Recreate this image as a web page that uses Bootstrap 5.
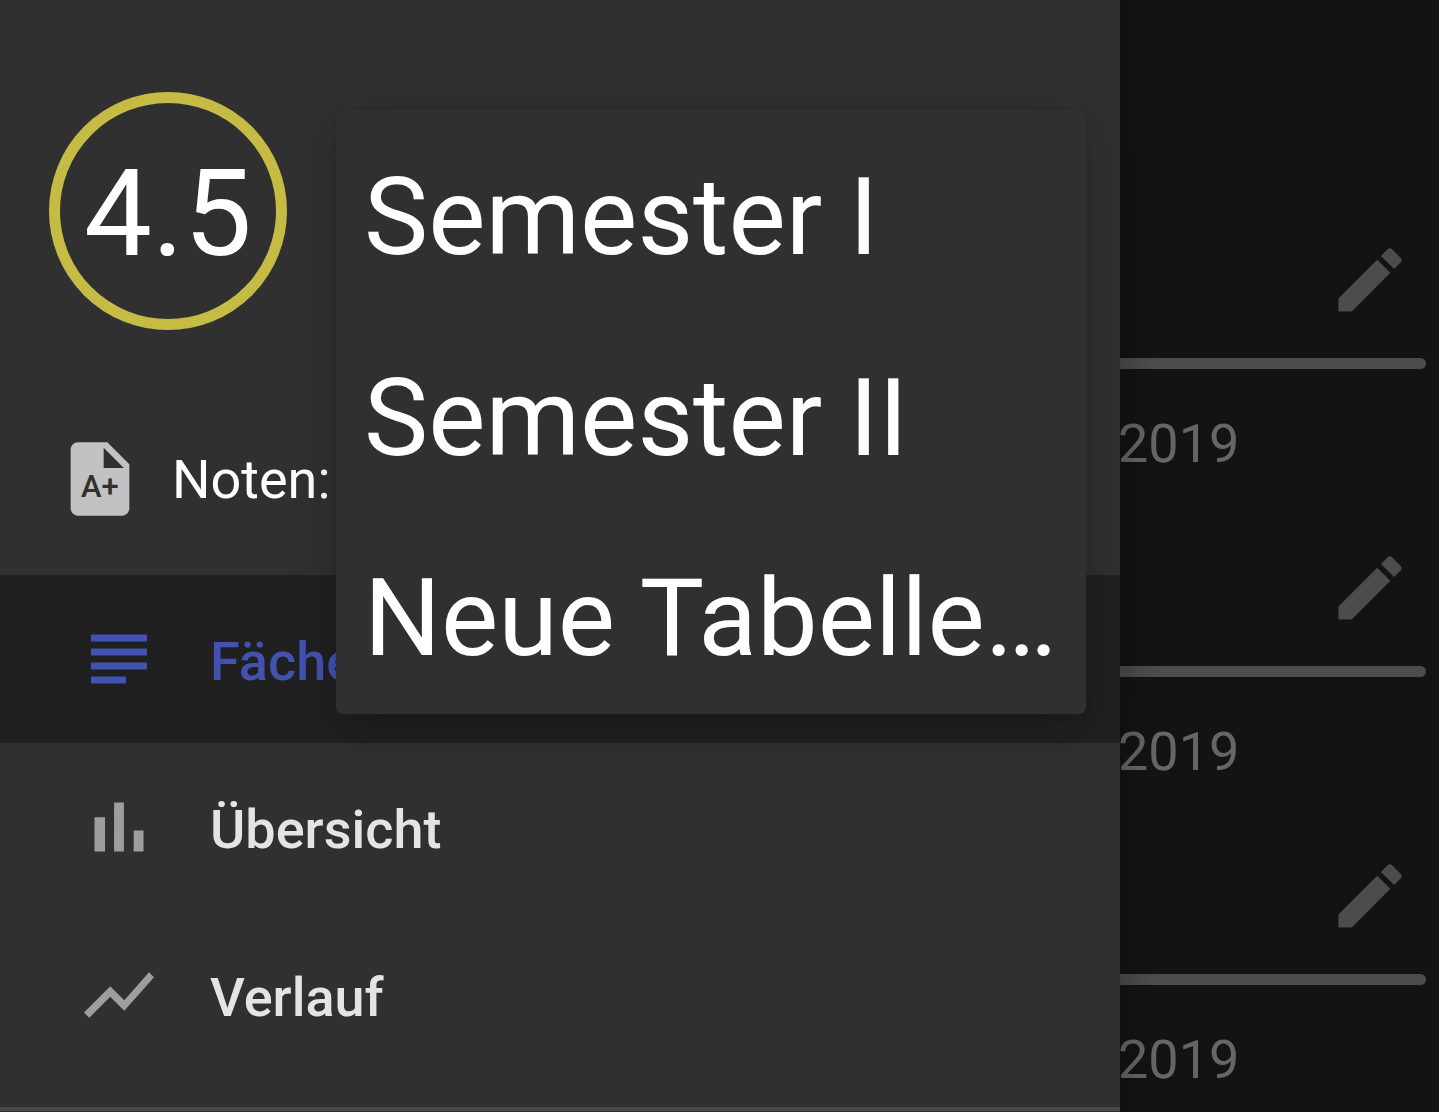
<!DOCTYPE html>
<html lang="de">
<head>
<meta charset="utf-8">
<meta name="viewport" content="width=device-width, initial-scale=1">
<title>Noten</title>
<link href="https://cdn.jsdelivr.net/npm/bootstrap@5.3.0/dist/css/bootstrap.min.css" rel="stylesheet">
<style>
  body { background: #131313; color: #fff; font-family: Roboto, "Noto Sans", sans-serif; font-size: 54px; line-height: 64px; }
  svg { display: block; fill: currentColor; }

  /* Drawer */
  .drawer { background: #303030; min-width: 0; }
  .drawer-head { padding: 92px 49px 52px; }
  .average { width: 238px; height: 238px; padding-top: 6px; border: 11px solid #c6bb45; font-size: 121px; line-height: 1; }
  .table-label { margin-top: 105px; padding-left: 7px; gap: 28px; }
  .table-label span { padding-top: 2px; }
  .table-label svg { width: 88px; height: 88px; color: #c2c2c2; }
  .table-label .grade-mark { font-size: 31px; font-weight: 500; fill: #303030; }
  .drawer-link { height: 168px; padding-left: 77px; gap: 49px; font-weight: 500; color: #e4e4e4; }
  .drawer-link:hover { color: #fff; }
  .drawer-link span { padding-top: 6px; }
  .drawer-link svg { width: 84px; height: 84px; color: #9e9e9e; }
  .drawer-link.active, .drawer-link.active svg { color: #4352b1; }
  .drawer-link.active { background: #202020; }
  .drawer-rule { margin: 28px 0 0; border-top: 4px solid #494949; opacity: 1; }

  /* Table picker */
  .picker { top: 110px; left: 336px; width: 750px; padding: 6px 0 0; border: 0; border-radius: 7px; background: #303030; box-shadow: 0 14px 48px rgba(0, 0, 0, .2), 0 2px 8px rgba(0, 0, 0, .06); overflow: hidden; height: 604px; }
  .picker .dropdown-item { height: 201px; padding: 0 28px; font-size: 108px; line-height: 1; color: #fff; }
  .picker .dropdown-item:last-child { height: 200px; }
  .picker .dropdown-item:hover { background: #3a3a3a; }

  /* Exam list behind the drawer */
  .exams { flex: 0 0 319px; padding-top: 210px; }
  .exams::before { content: ""; position: absolute; inset: 0 auto 0 0; width: 36px; background: linear-gradient(90deg, rgba(0, 0, 0, .16), transparent); }
  .exam { padding: 28px 0 42px; }
  .edit-btn { margin-right: 27px; border: 0; color: #4c4c4c; }
  .edit-btn svg { width: 84px; height: 84px; }
  .exam-line { height: 11px; margin: 36px 13px 43px 0; border-radius: 0 6px 6px 0; background: #4c4c4c; }
  .exam-date { margin-left: -2px; color: #666; }
</style>
</head>
<body>
<div class="d-flex vh-100 overflow-hidden">
  <aside class="drawer position-relative flex-grow-1">
    <header class="drawer-head">
      <div class="average rounded-circle d-flex align-items-center justify-content-center">4.5</div>
      <div class="table-label d-flex align-items-center">
        <svg viewBox="0 0 88 88" aria-hidden="true">
          <path transform="scale(3.667)" fill-rule="evenodd" d="M6 2h8l6 6v12c0 1.100-.9 2-2 2H6c-1.100 0-2-.9-2-2V4c0-1.100.9-2 2-2zM13 3.500V9h5.500z"/>
          <text class="grade-mark" x="25" y="62">A+</text>
        </svg>
        <span>Noten:</span>
      </div>
    </header>
    <nav class="nav flex-column flex-nowrap">
      <a class="drawer-link active d-flex align-items-center text-decoration-none" href="#faecher" aria-current="page">
        <svg viewBox="0 0 24 24" aria-hidden="true"><path d="M4 5h16v2H4zM4 9h16v2H4zM4 13h16v2H4zM4 17h10v2H4z"/></svg>
        <span>Fächer</span>
      </a>
      <a class="drawer-link d-flex align-items-center text-decoration-none" href="#uebersicht">
        <svg viewBox="0 0 24 24" aria-hidden="true"><path d="M5 9.200h3V19H5zM10.600 5h2.800v14h-2.800zM16.200 13H19v6h-2.800z"/></svg>
        <span>Übersicht</span>
      </a>
      <a class="drawer-link d-flex align-items-center text-decoration-none" href="#verlauf">
        <svg viewBox="0 0 24 24" aria-hidden="true"><path d="M3.500 18.490l6-6.010 4 4L22 6.920l-1.410-1.410-7.090 7.970-4-4L2 16.990z"/></svg>
        <span>Verlauf</span>
      </a>
    </nav>
    <hr class="drawer-rule">
    <div class="picker dropdown-menu show">
      <button class="dropdown-item" type="button">Semester I</button>
      <button class="dropdown-item" type="button">Semester II</button>
      <button class="dropdown-item" type="button">Neue Tabelle…</button>
    </div>
  </aside>
  <main class="exams position-relative">
    <article class="exam">
      <button class="edit-btn btn p-0 d-block ms-auto" type="button" aria-label="Bearbeiten"><svg viewBox="0 0 24 24"><path d="M3 17.250V21h3.750L17.810 9.940l-3.750-3.750zM20.710 7.040a1 1 0 0 0 0-1.410l-2.340-2.340a1 1 0 0 0-1.410 0l-1.830 1.830 3.750 3.750z"/></svg></button>
      <div class="exam-line"></div>
      <div class="exam-date">2019</div>
    </article>
    <article class="exam">
      <button class="edit-btn btn p-0 d-block ms-auto" type="button" aria-label="Bearbeiten"><svg viewBox="0 0 24 24"><path d="M3 17.250V21h3.750L17.810 9.940l-3.750-3.750zM20.710 7.040a1 1 0 0 0 0-1.410l-2.340-2.340a1 1 0 0 0-1.410 0l-1.830 1.830 3.750 3.750z"/></svg></button>
      <div class="exam-line"></div>
      <div class="exam-date">2019</div>
    </article>
    <article class="exam">
      <button class="edit-btn btn p-0 d-block ms-auto" type="button" aria-label="Bearbeiten"><svg viewBox="0 0 24 24"><path d="M3 17.250V21h3.750L17.810 9.940l-3.750-3.750zM20.710 7.040a1 1 0 0 0 0-1.410l-2.340-2.340a1 1 0 0 0-1.410 0l-1.830 1.830 3.750 3.750z"/></svg></button>
      <div class="exam-line"></div>
      <div class="exam-date">2019</div>
    </article>
  </main>
</div>
<script src="https://cdn.jsdelivr.net/npm/bootstrap@5.3.0/dist/js/bootstrap.bundle.min.js"></script>
</body>
</html>
